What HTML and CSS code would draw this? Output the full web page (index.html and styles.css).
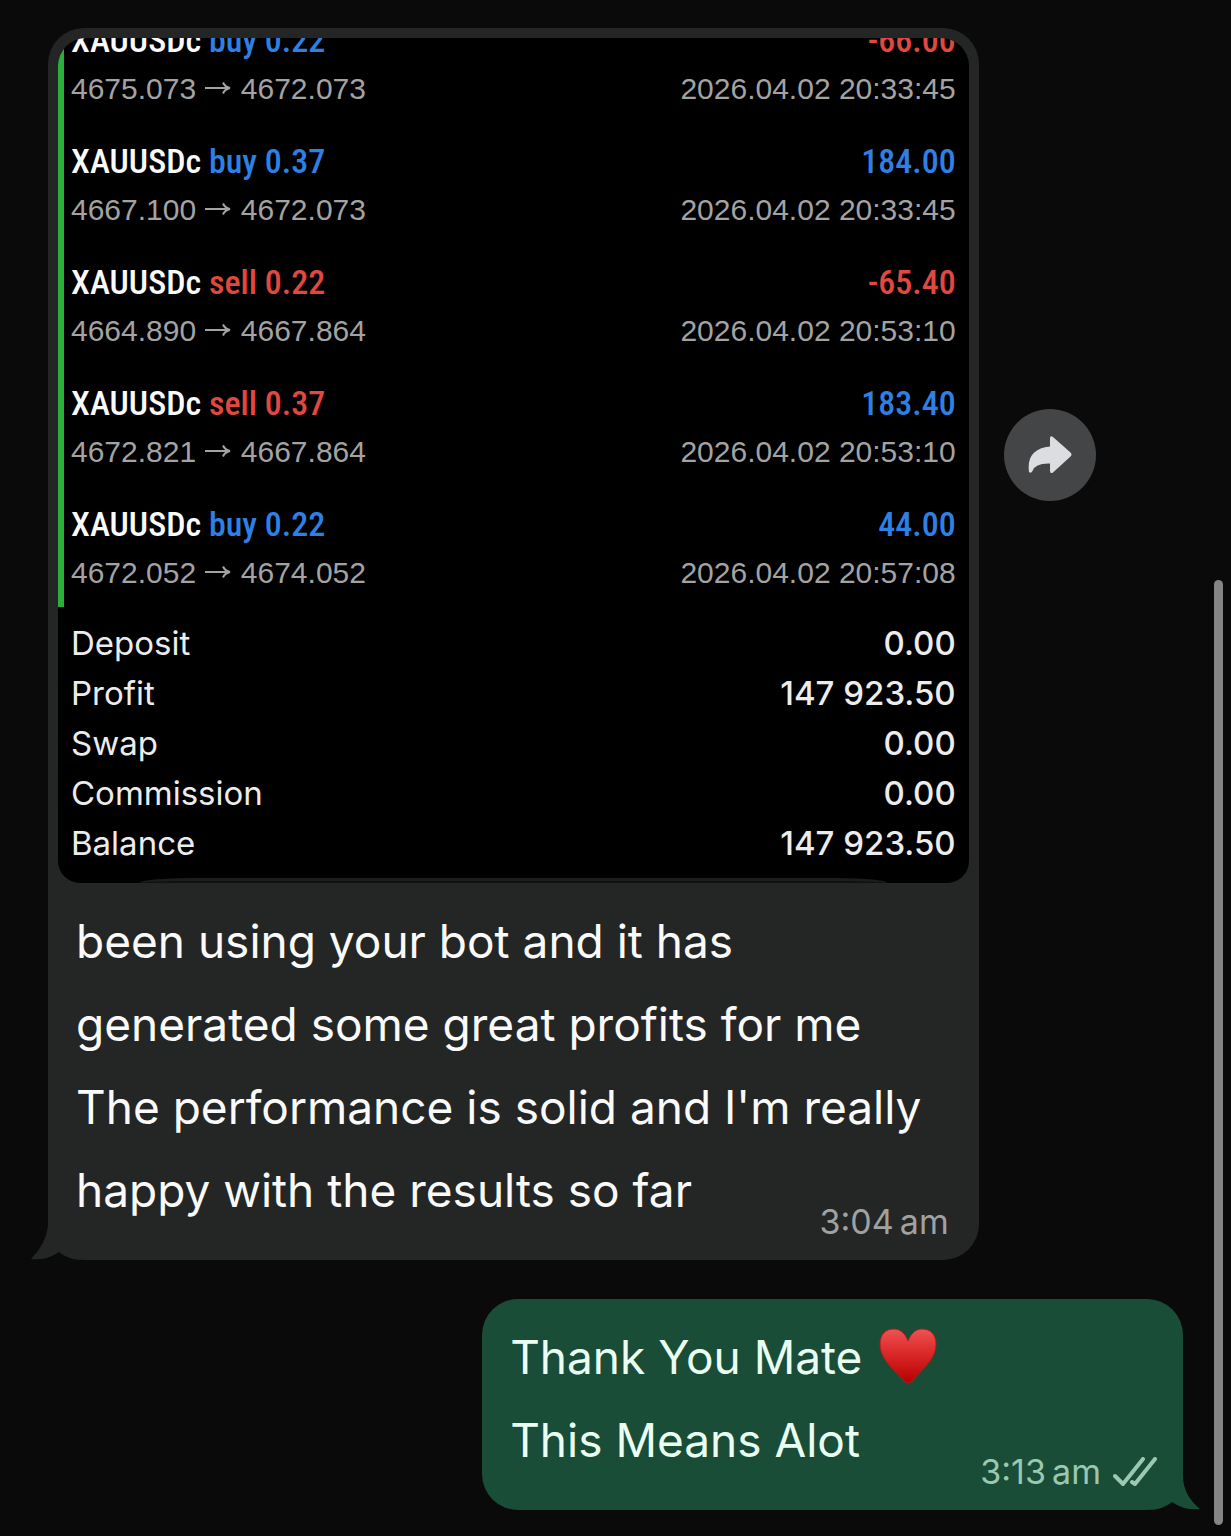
FILE: index.html
```
<!DOCTYPE html>
<html lang="en">
  <head>
    <meta charset="utf-8">
    <title>Chat</title>
    <meta name="viewport" content="width=device-width, initial-scale=1">
    <link rel="stylesheet" href="styles.css">
  </head>
  <body>
    <main class="chat">
      <div class="row">
        <article class="bubble incoming">
          <div class="media">
            <ul class="trades">
              <li class="trade">
                <div class="line title"><span>XAUUSDc <span class="blue">buy 0.22</span></span><span class="red">-66.00</span></div>
                <div class="line detail"><span class="prices">4675.073 <svg class="arrow" viewBox="0 0 28 16"><path d="M1 8H26M19 2.500Q21 7 26 8Q21 9 19 13.500"/></svg> 4672.073</span><time>2026.04.02 20:33:45</time></div>
              </li>
              <li class="trade">
                <div class="line title"><span>XAUUSDc <span class="blue">buy 0.37</span></span><span class="blue">184.00</span></div>
                <div class="line detail"><span class="prices">4667.100 <svg class="arrow" viewBox="0 0 28 16"><path d="M1 8H26M19 2.500Q21 7 26 8Q21 9 19 13.500"/></svg> 4672.073</span><time>2026.04.02 20:33:45</time></div>
              </li>
              <li class="trade">
                <div class="line title"><span>XAUUSDc <span class="red">sell 0.22</span></span><span class="red">-65.40</span></div>
                <div class="line detail"><span class="prices">4664.890 <svg class="arrow" viewBox="0 0 28 16"><path d="M1 8H26M19 2.500Q21 7 26 8Q21 9 19 13.500"/></svg> 4667.864</span><time>2026.04.02 20:53:10</time></div>
              </li>
              <li class="trade">
                <div class="line title"><span>XAUUSDc <span class="red">sell 0.37</span></span><span class="blue">183.40</span></div>
                <div class="line detail"><span class="prices">4672.821 <svg class="arrow" viewBox="0 0 28 16"><path d="M1 8H26M19 2.500Q21 7 26 8Q21 9 19 13.500"/></svg> 4667.864</span><time>2026.04.02 20:53:10</time></div>
              </li>
              <li class="trade">
                <div class="line title"><span>XAUUSDc <span class="blue">buy 0.22</span></span><span class="blue">44.00</span></div>
                <div class="line detail"><span class="prices">4672.052 <svg class="arrow" viewBox="0 0 28 16"><path d="M1 8H26M19 2.500Q21 7 26 8Q21 9 19 13.500"/></svg> 4674.052</span><time>2026.04.02 20:57:08</time></div>
              </li>
            </ul>
            <table class="summary">
              <tr><th scope="row">Deposit</th><td>0.00</td></tr>
              <tr><th scope="row">Profit</th><td>147 923.50</td></tr>
              <tr><th scope="row">Swap</th><td>0.00</td></tr>
              <tr><th scope="row">Commission</th><td>0.00</td></tr>
              <tr><th scope="row">Balance</th><td>147 923.50</td></tr>
            </table>
            <div class="sheet"></div>
          </div>
          <p class="text">been using your bot and it has<br>generated some great profits for me<br>The performance is solid and I'm really<br>happy with the results so far</p>
          <div class="meta"><time>3:04&#8201;am</time></div>
          <svg class="tail" viewBox="0 0 52 46"><path d="M17 0V12Q15 30 0 45Q15 47 28 38Q36 45 50 46L17 0Z"/></svg>
        </article>
        <button type="button" class="forward" aria-label="Forward">
          <svg viewBox="0 0 46 40"><path d="M23 3.500Q23 0 26 2L43.500 17.500Q45.500 19.500 43.500 21.500L26 37.500Q23 39 23 36V28.500Q8 28 5.500 36Q4 39 2 37Q-1 14 23 11.500Z"/></svg>
        </button>
      </div>
      <div class="row">
        <article class="bubble outgoing">
          <p class="text">Thank You Mate <svg class="heart" role="img" aria-label="red heart" viewBox="0 0 58 56">
            <defs>
              <linearGradient id="heart-fill" x1="0" y1="0" x2="0" y2="1">
                <stop offset="0" stop-color="#ee5453"/>
                <stop offset=".45" stop-color="#db2828"/>
                <stop offset="1" stop-color="#b50000"/>
              </linearGradient>
            </defs>
            <path fill="url(#heart-fill)" stroke="#b51a1a" d="M29 13C26 5 21 1 15 1C6 1 1 7 1 16C1 32 16 42 25 53Q29 57 33 53C42 42 57 32 57 16C57 7 52 1 43 1C37 1 32 5 29 13Z"/>
          </svg><br>This Means Alot</p>
          <div class="meta">
            <time>3:13&#8201;am</time>
            <svg class="ticks" role="img" aria-label="Delivered" viewBox="0 0 44 30"><path d="M2 19L10 27L30 2M19 25L22 27L42 2"/></svg>
          </div>
          <svg class="tail" viewBox="0 0 52 46"><path d="M17 0V12Q17 31 0 45Q15 47 28 38Q36 45 50 46L17 0Z"/></svg>
        </article>
      </div>
    </main>
    <div class="scrollbar"></div>
  </body>
</html>
```
FILE: styles.css
```
* {
  box-sizing: border-box;
}
body {
  margin: 0;
  min-height: 100vh;
  position: relative;
  background-color: #0a0a0a;
  color: #fafafa;
  font-family: Inter, sans-serif;
}
.chat {
  display: flex;
  flex-direction: column;
  gap: 39px;
  padding: 28px 48px 24px;
}
.row {
  display: flex;
  align-items: flex-start;
  gap: 25px;
}
.bubble {
  position: relative;
  border-radius: 36px;
  padding: 10px 10px 18px;
}
.incoming {
  width: 82%;
  background-color: #242626;
}
.outgoing {
  width: 61.75%;
  margin-left: auto;
  padding-top: 0;
  background-color: #194d38;
  color: #eafff2;
}
.tail {
  position: absolute;
  left: -17px;
  bottom: 0;
  width: 52px;
  height: 46px;
  fill: #242626;
}
.outgoing .tail {
  left: auto;
  right: -17px;
  fill: #194d38;
  transform: scaleX(-1);
}

/* trade history */
.media {
  position: relative;
  overflow: hidden;
  border-radius: 28px 28px 22px 22px;
  background-color: #000;
}
.trades {
  list-style: none;
  margin: -36px 0 0;
  padding: 0;
  border-left: 6px solid #27b03c;
}
.trade {
  padding: 14px 13px 9px 7px;
}
.line {
  display: flex;
  justify-content: space-between;
}
.title {
  font: 500 34px/48px "Roboto Condensed", Roboto, sans-serif;
}
.detail {
  font: 30px/50px "Liberation Sans", sans-serif;
  color: #a3a3a3;
}
.arrow {
  width: 28px;
  height: 16px;
  vertical-align: 3px;
  fill: none;
  stroke: #a3a3a3;
  stroke-width: 2;
}
.blue {
  color: #2f80e4;
}
.red {
  color: #e14840;
}
.summary {
  width: 100%;
  margin: 11px 0 15px;
  border-collapse: collapse;
  font-size: 33px;
  line-height: 50px;
  color: #ececec;
}
.summary th,
.summary td {
  padding: 0 13px;
  font-weight: 400;
  text-align: left;
}
.summary td {
  text-align: right;
  font-weight: 500;
}
.sheet {
  position: absolute;
  left: 9%;
  right: 9%;
  bottom: 0;
  height: 5px;
  border-top: 3px solid #1c1d1d;
  border-radius: 50px 50px 0 0 / 5px 5px 0 0;
  background-color: #101111;
}

/* message text */
.text {
  margin: 0;
  padding: 17px 18px 0;
  font-size: 46px;
  line-height: 83px;
}
.meta {
  display: flex;
  justify-content: flex-end;
  align-items: center;
  gap: 12px;
  margin-top: -30px;
  padding-right: 20px;
  font-size: 34px;
  line-height: 40px;
  color: #a0a1a1;
}
.outgoing .meta {
  padding-right: 16px;
  color: #9cc7b1;
}
.ticks {
  width: 44px;
  height: 30px;
  fill: none;
  stroke: #9cc7b1;
  stroke-width: 4;
  stroke-linecap: round;
  stroke-linejoin: round;
}
.heart {
  width: 58px;
  height: 56px;
  margin-left: 4px;
  vertical-align: -10px;
}

.forward {
  display: flex;
  justify-content: center;
  align-items: center;
  flex: none;
  width: 92px;
  height: 92px;
  margin-top: 381px;
  padding: 0;
  border: 0;
  border-radius: 50%;
  background-color: #444547;
}
.forward svg {
  width: 46px;
  height: 40px;
  fill: #dcdde0;
}
.scrollbar {
  position: absolute;
  top: 580px;
  right: 8px;
  bottom: 11px;
  width: 9px;
  border-radius: 5px;
  background-color: #858585;
}
```
